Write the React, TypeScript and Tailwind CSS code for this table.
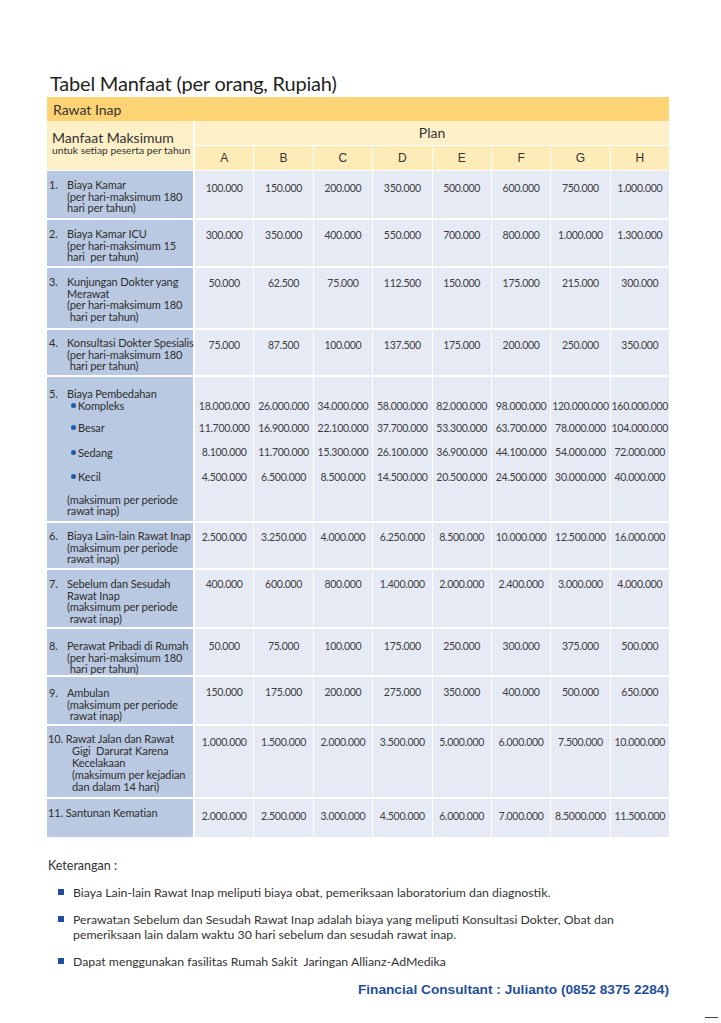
import React from "react";

type Row = {
  n: string;
  lines: string[];
  v: string[];
  h: string;
  lp: string;
  np: string;
};

const rows: Row[] = [
  {
    n: "1.",
    lines: ["Biaya Kamar", "(per hari-maksimum 180", "hari per tahun)"],
    v: ["100.000", "150.000", "200.000", "350.000", "500.000", "600.000", "750.000", "1.000.000"],
    h: "h-[47px]",
    lp: "pt-[8px]",
    np: "pt-[12px]",
  },
  {
    n: "2.",
    lines: ["Biaya Kamar ICU", "(per hari-maksimum 15", "hari  per tahun)"],
    v: ["300.000", "350.000", "400.000", "550.000", "700.000", "800.000", "1.000.000", "1.300.000"],
    h: "h-[46px]",
    lp: "pt-[8px]",
    np: "pt-[10px]",
  },
  {
    n: "3.",
    lines: ["Kunjungan Dokter yang", "Merawat", "(per hari-maksimum 180", "\u00a0hari per tahun)"],
    v: ["50.000", "62.500", "75.000", "112.500", "150.000", "175.000", "215.000", "300.000"],
    h: "h-[60px]",
    lp: "pt-[8px]",
    np: "pt-[10px]",
  },
  {
    n: "4.",
    lines: ["Konsultasi Dokter Spesialis", "(per hari-maksimum 180", "\u00a0hari per tahun)"],
    v: ["75.000", "87.500", "100.000", "137.500", "175.000", "200.000", "250.000", "350.000"],
    h: "h-[45px]",
    lp: "pt-[7px]",
    np: "pt-[10px]",
  },
];

const rows2: Row[] = [
  {
    n: "6.",
    lines: ["Biaya Lain-lain Rawat Inap", "(maksimum per periode", "rawat inap)"],
    v: ["2.500.000", "3.250.000", "4.000.000", "6.250.000", "8.500.000", "10.000.000", "12.500.000", "16.000.000"],
    h: "h-[45px]",
    lp: "pt-[7px]",
    np: "pt-[9px]",
  },
  {
    n: "7.",
    lines: ["Sebelum dan Sesudah", "Rawat Inap", "(maksimum per periode", "\u00a0rawat inap)"],
    v: ["400.000", "600.000", "800.000", "1.400.000", "2.000.000", "2.400.000", "3.000.000", "4.000.000"],
    h: "h-[57px]",
    lp: "pt-[8px]",
    np: "pt-[9px]",
  },
  {
    n: "8.",
    lines: ["Perawat Pribadi di Rumah", "(per hari-maksimum 180", "\u00a0hari per tahun)"],
    v: ["50.000", "75.000", "100.000", "175.000", "250.000", "300.000", "375.000", "500.000"],
    h: "h-[46px]",
    lp: "pt-[11px]",
    np: "pt-[12px]",
  },
  {
    n: "9.",
    lines: ["Ambulan", "(maksimum per periode", "\u00a0rawat inap)"],
    v: ["150.000", "175.000", "200.000", "275.000", "350.000", "400.000", "500.000", "650.000"],
    h: "h-[47px]",
    lp: "pt-[10px]",
    np: "pt-[10px]",
  },
];

const surgery = [
  ["18.000.000", "11.700.000", "8.100.000", "4.500.000"],
  ["26.000.000", "16.900.000", "11.700.000", "6.500.000"],
  ["34.000.000", "22.100.000", "15.300.000", "8.500.000"],
  ["58.000.000", "37.700.000", "26.100.000", "14.500.000"],
  ["82.000.000", "53.300.000", "36.900.000", "20.500.000"],
  ["98.000.000", "63.700.000", "44.100.000", "24.500.000"],
  ["120.000.000", "78.000.000", "54.000.000", "30.000.000"],
  ["160.000.000", "104.000.000", "72.000.000", "40.000.000"],
];

const row10 = ["1.000.000", "1.500.000", "2.000.000", "3.500.000", "5.000.000", "6.000.000", "7.500.000", "10.000.000"];
const row11 = ["2.000.000", "2.500.000", "3.000.000", "4.500.000", "6.000.000", "7.000.000", "8.5000.000", "11.500.000"];

const GRID = "grid grid-cols-[147px_repeat(8,minmax(0,1fr))] gap-x-px";
const LEFT = "mr-px bg-[#b9c9e1] text-[#2e2e2e] text-[11px] tracking-[-0.1px] whitespace-nowrap";
const CELL = "bg-[#e5eaf5] flex flex-col items-center text-[#3d3d3d] text-[10.5px] tracking-[-0.3px] whitespace-nowrap";

function Values({ v, np }: { v: string[]; np: string }) {
  return (
    <>
      {v.map((x, i) => (
        <div key={i} className={`${CELL} leading-[11.5px] ${np}`}>
          {x}
        </div>
      ))}
    </>
  );
}

function StdRow({ r }: { r: Row }) {
  return (
    <div className={`${GRID} ${r.h}`}>
      <div className={`${LEFT} leading-[11.5px] ${r.lp} pl-[2px] flex`}>
        <span className="w-[18px] shrink-0">{r.n}</span>
        <div className="whitespace-pre">
          {r.lines.map((l, i) => (
            <div key={i}>{l}</div>
          ))}
        </div>
      </div>
      <Values v={r.v} np={r.np} />
    </div>
  );
}

function Bullet() {
  return <span className="inline-block w-[5px] h-[5px] rounded-full bg-[#1f5ca8] ml-[4px] mr-[2px]" />;
}

export default function App() {
  return (
    <div className="relative w-[721px] h-[1023px] bg-white overflow-hidden font-[Lato,sans-serif]">
      <div className="pl-[47px] pt-[71px]">
        <h1 className="ml-[3px] text-[20px] leading-[24px] tracking-[-0.2px] text-[#231f20]">
          Tabel Manfaat (per orang, Rupiah)
        </h1>

        <div className="mt-[2px] w-[622px] flex flex-col">
          {/* band */}
          <div className="h-[24px] bg-[#fdd373] flex items-center pl-[6px] text-[14px] text-[#333]">Rawat Inap</div>

          {/* header */}
          <div className={`${GRID} grid-rows-[24px_24px] gap-y-px`}>
            <div className="row-span-2 mr-px bg-[#fdefc6] pl-[5px] pt-[9px] text-[#333]">
              <div className="text-[14px] leading-[15px]">Manfaat Maksimum</div>
              <div className="text-[10.3px] leading-[11px]">untuk setiap peserta per tahun</div>
            </div>
            <div className="col-span-8 bg-[#fef0c8] flex justify-center items-center text-[14px] text-[#333] pb-[2px]">
              Plan
            </div>
            {["A", "B", "C", "D", "E", "F", "G", "H"].map((c) => (
              <div
                key={c}
                className="bg-[#fdebb8] flex items-center justify-center text-[12px] text-[#333] font-['Liberation_Sans',sans-serif]"
              >
                {c}
              </div>
            ))}
          </div>

          {/* body */}
          <div className="mt-px flex flex-col gap-y-[2px]">
            {rows.map((r) => (
              <StdRow key={r.n} r={r} />
            ))}

            {/* row 5 */}
            <div className={`${GRID} h-[144px]`}>
              <div className={`${LEFT} leading-[11.5px] pt-[11px] pl-[2px] flex`}>
                <span className="w-[18px] shrink-0">5.</span>
                <div>
                  <div>Biaya Pembedahan</div>
                  <div className="flex items-center h-[11.5px]"><Bullet />Kompleks</div>
                  <div className="mt-[11px] flex items-center h-[11.5px]"><Bullet />Besar</div>
                  <div className="mt-[13px] flex items-center h-[11.5px]"><Bullet />Sedang</div>
                  <div className="mt-[13px] flex items-center h-[11.5px]"><Bullet />Kecil</div>
                  <div className="mt-[11px]">(maksimum per periode</div>
                  <div>rawat inap)</div>
                </div>
              </div>
              {surgery.map((col, i) => (
                <div key={i} className={`${CELL} leading-[10px] pt-[24px]`}>
                  <div>{col[0]}</div>
                  <div className="mt-[12px]">{col[1]}</div>
                  <div className="mt-[14px]">{col[2]}</div>
                  <div className="mt-[15px]">{col[3]}</div>
                </div>
              ))}
            </div>

            {rows2.map((r) => (
              <StdRow key={r.n} r={r} />
            ))}

            {/* row 10 */}
            <div className={`${GRID} h-[71px]`}>
              <div className={`${LEFT} leading-[12px] pt-[7px] pl-[1px] whitespace-pre`}>
                <div>10. Rawat Jalan dan Rawat</div>
                <div className="pl-[24px]">Gigi  Darurat Karena</div>
                <div className="pl-[24px]">Kecelakaan</div>
                <div className="pl-[24px]">(maksimum per kejadian</div>
                <div className="pl-[24px]">dan dalam 14 hari)</div>
              </div>
              <Values v={row10} np="pt-[11px]" />
            </div>

            {/* row 11 */}
            <div className={`${GRID} h-[38px]`}>
              <div className={`${LEFT} leading-[11.5px] pt-[8px] pl-[1px]`}>11. Santunan Kematian</div>
              <Values v={row11} np="pt-[12px]" />
            </div>
          </div>
        </div>

        {/* Keterangan */}
        <div className="mt-[21px] ml-[1px] text-[#333] text-[12.5px] leading-[16px]">Keterangan :</div>
        <ul className="pl-[11px] text-[#333] text-[12.3px] leading-[15px] whitespace-nowrap">
          <li className="mt-[11px] flex items-start">
            <span className="mt-[4px] w-[6px] h-[6px] bg-[#1f4e9b] mr-[9px] shrink-0" />
            <span>Biaya Lain-lain Rawat Inap meliputi biaya obat, pemeriksaan laboratorium dan diagnostik.</span>
          </li>
          <li className="mt-[12px] flex items-start">
            <span className="mt-[4px] w-[6px] h-[6px] bg-[#1f4e9b] mr-[9px] shrink-0" />
            <span>
              Perawatan Sebelum dan Sesudah Rawat Inap adalah biaya yang meliputi Konsultasi Dokter, Obat dan
              <br />
              pemeriksaan lain dalam waktu 30 hari sebelum dan sesudah rawat inap.
            </span>
          </li>
          <li className="mt-[12px] flex items-start">
            <span className="mt-[4px] w-[6px] h-[6px] bg-[#1f4e9b] mr-[9px] shrink-0" />
            <span>Dapat menggunakan fasilitas Rumah Sakit&nbsp; Jaringan Allianz-AdMedika</span>
          </li>
        </ul>
        <div className="mt-[13px] w-[622px] text-right font-['Liberation_Sans',sans-serif] font-bold text-[13.7px] leading-[15px] text-[#1f4f9b]">
          Financial Consultant : Julianto (0852 8375 2284)
        </div>
      </div>
      <div className="absolute left-[705px] top-[1017px] w-[13px] h-[1px] bg-[#444]" />
    </div>
  );
}
